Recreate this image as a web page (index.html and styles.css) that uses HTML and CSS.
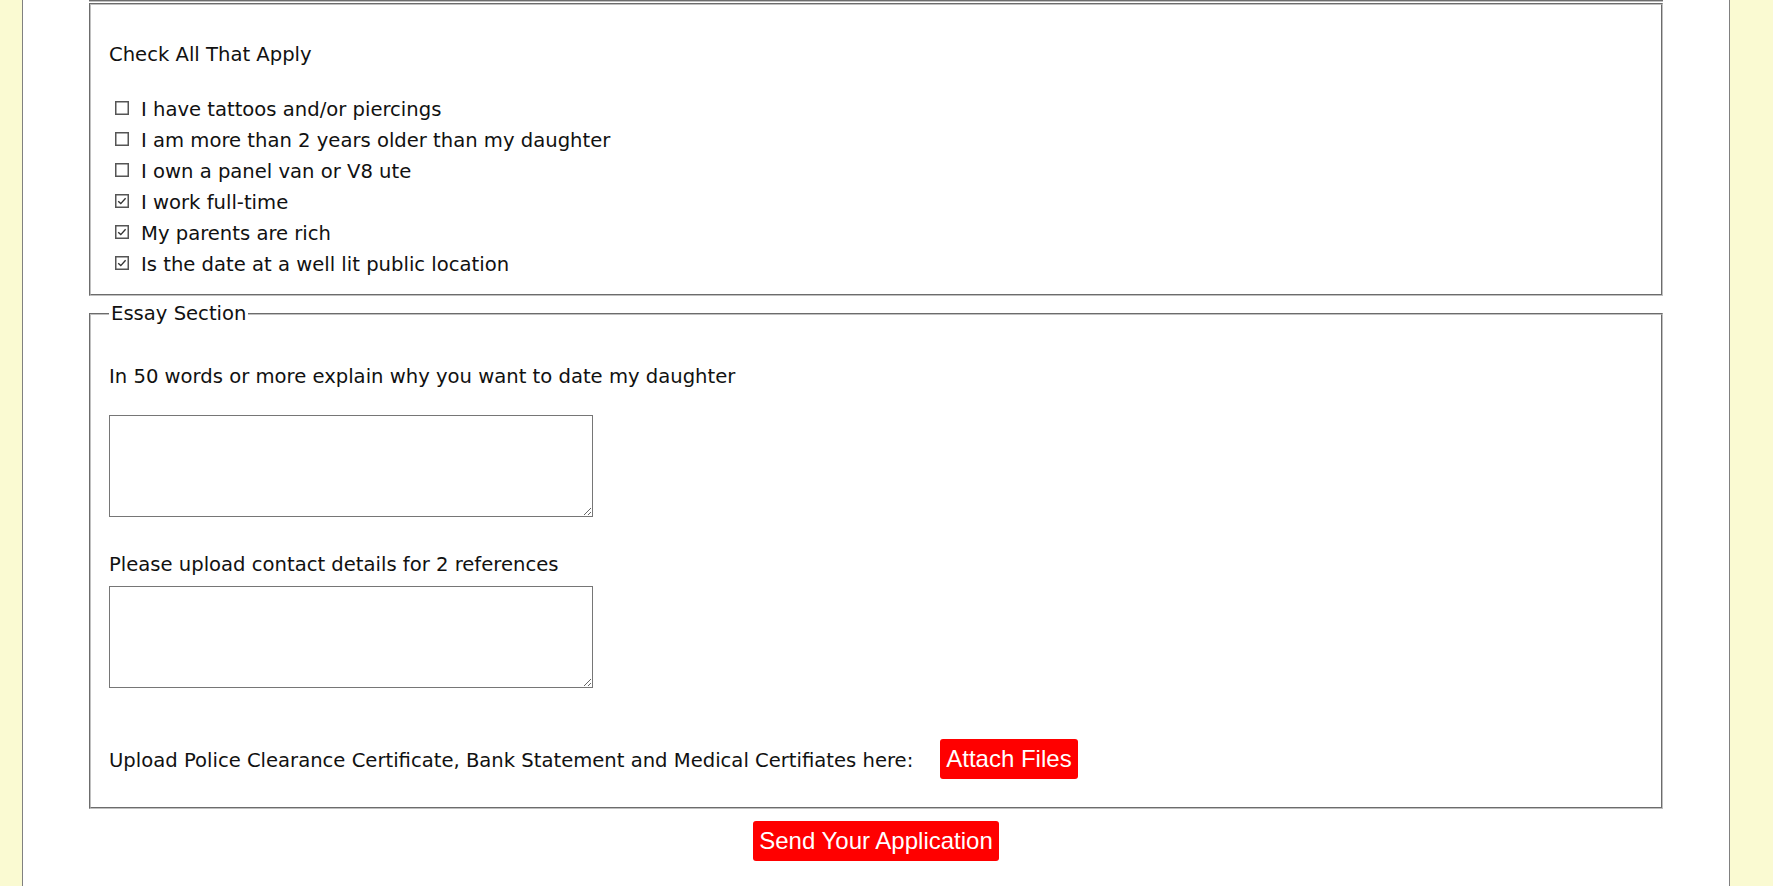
FILE: index.html
```html
<!DOCTYPE html>
<html lang="en">
<head>
<meta charset="utf-8">
<title>Application</title>
<link rel="stylesheet" href="styles.css">
</head>
<body>
<div class="page">
  <div class="prev-edge"></div>
  <fieldset class="section checks">
    <p class="title">Check All That Apply</p>
    <ul class="check-list">
      <li><svg class="box" width="14" height="14" viewBox="0 0 14 14"><rect x="0.75" y="0.75" width="12.5" height="12.5" fill="#fff" stroke="#555" stroke-width="1.5"/></svg>I have tattoos and/or piercings</li>
      <li><svg class="box" width="14" height="14" viewBox="0 0 14 14"><rect x="0.75" y="0.75" width="12.5" height="12.5" fill="#fff" stroke="#555" stroke-width="1.5"/></svg>I am more than 2 years older than my daughter</li>
      <li><svg class="box" width="14" height="14" viewBox="0 0 14 14"><rect x="0.75" y="0.75" width="12.5" height="12.5" fill="#fff" stroke="#555" stroke-width="1.5"/></svg>I own a panel van or V8 ute</li>
      <li><svg class="box" width="14" height="14" viewBox="0 0 14 14"><rect x="0.75" y="0.75" width="12.5" height="12.5" fill="#fff" stroke="#555" stroke-width="1.5"/><path d="M3.2 7.2 L5.8 9.6 L10.6 4.2" fill="none" stroke="#333" stroke-width="1.4"/></svg>I work full-time</li>
      <li><svg class="box" width="14" height="14" viewBox="0 0 14 14"><rect x="0.75" y="0.75" width="12.5" height="12.5" fill="#fff" stroke="#555" stroke-width="1.5"/><path d="M3.2 7.2 L5.8 9.6 L10.6 4.2" fill="none" stroke="#333" stroke-width="1.4"/></svg>My parents are rich</li>
      <li><svg class="box" width="14" height="14" viewBox="0 0 14 14"><rect x="0.75" y="0.75" width="12.5" height="12.5" fill="#fff" stroke="#555" stroke-width="1.5"/><path d="M3.2 7.2 L5.8 9.6 L10.6 4.2" fill="none" stroke="#333" stroke-width="1.4"/></svg>Is the date at a well lit public location</li>
    </ul>
  </fieldset>
  <fieldset class="section essay">
    <legend>Essay Section</legend>
    <p class="label first">In 50 words or more explain why you want to date my daughter</p>
    <textarea class="answer answer-first"></textarea>
    <p class="label second">Please upload contact details for 2 references</p>
    <textarea class="answer answer-second"></textarea>
    <div class="upload-row">
      <span class="upload-label">Upload Police Clearance Certificate, Bank Statement and Medical Certifiates here:</span>
      <button class="red-btn" type="button">Attach Files</button>
    </div>
  </fieldset>
  <div class="submit-row">
    <button class="red-btn" type="button">Send Your Application</button>
  </div>
</div>
</body>
</html>
```
FILE: styles.css
```css
html, body {
  margin: 0;
  padding: 0;
}
body {
  background: #fafad2;
  font-family: "DejaVu Sans", sans-serif;
  font-size: 19.6px;
  color: #111;
}
.page {
  box-sizing: border-box;
  width: 1708px;
  min-height: 886px;
  margin-left: 22px;
  padding: 0 66px;
  background: #fff;
  border-left: 1px solid #808080;
  border-right: 1px solid #808080;
  overflow: hidden;
}
.prev-edge {
  height: 0;
  border-bottom: 2px groove #c0c0c0;
}
.section {
  margin: 0;
  padding: 0 18px;
  min-width: 0;
  border: 2px groove #c0c0c0;
}
.checks {
  margin-top: 1px;
  padding-bottom: 14px;
}
.title {
  margin: 34px 0 0;
  line-height: 31px;
}
.check-list {
  list-style: none;
  margin: 24px 0 0;
  padding: 0;
  line-height: 31px;
}
.box {
  vertical-align: 1px;
  margin-left: 6px;
  margin-right: 12px;
}
.essay {
  margin-top: 2px;
  padding-bottom: 28px;
}
.essay legend {
  padding: 0 2px;
  line-height: 31px;
}
.label {
  margin: 0;
  line-height: 31px;
}
.label.first {
  margin-top: 32px;
}
.label.second {
  margin-top: 32px;
}
.answer {
  display: block;
  box-sizing: border-box;
  width: 484px;
  height: 102px;
  margin: 0;
  border: 1px solid #767676;
  background: #fff;
}
.answer-first {
  margin-top: 23px;
}
.answer-second {
  margin-top: 6px;
}
.upload-row {
  display: flex;
  align-items: baseline;
  gap: 27px;
  margin-top: 51px;
  line-height: 31px;
}
.red-btn {
  font-family: "Liberation Sans", Arial, sans-serif;
  font-size: 24px;
  height: 40px;
  line-height: 40px;
  padding: 0 6px;
  border: 0;
  border-radius: 3px;
  background: #ff0000;
  color: #fff;
}
.submit-row {
  margin-top: 12px;
  text-align: center;
}
```
